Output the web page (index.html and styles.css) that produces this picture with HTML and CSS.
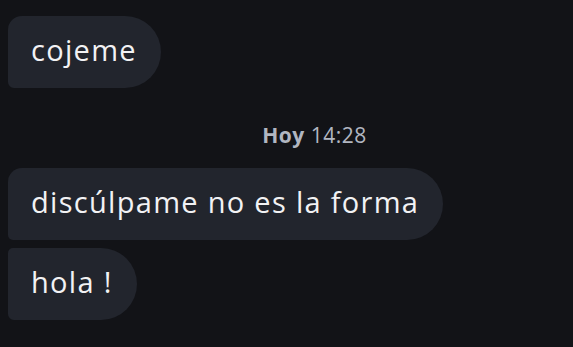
FILE: index.html
```html
<!DOCTYPE html>
<html lang="es">
<head>
  <meta charset="UTF-8">
  <meta name="viewport" content="width=device-width, initial-scale=1.0">
  <title>Chat</title>
  <link rel="stylesheet" href="styles.css">
</head>
<body>
  <div class="chat">
    <!-- Grupo anterior -->
    <div class="group">
      <div class="bubble single">cojeme</div>
    </div>

    <!-- Separador de hora -->
    <div class="stamp"><b>Hoy</b> 14:28</div>

    <!-- Grupo nuevo -->
    <div class="group">
      <div class="bubble first">discúlpame no es la forma</div>
      <div class="bubble last">hola !</div>
    </div>
  </div>
</body>
</html>
```

FILE: styles.css
```css
body {
  margin: 0;
  padding: 0;
  background-color: #121317;
  font-family: "Open Sans", sans-serif;
}
.chat {
  padding: 16px 8px;
}
.group {
  display: flex;
  flex-direction: column;
  align-items: flex-start;
  gap: 8px;
}
.bubble {
  background-color: #22252d;
  color: #f2f2f4;
  font-size: 29px;
  letter-spacing: 1.3px;
  line-height: 68px;
  height: 68px;
  padding: 0 24px 4px 23px;
  border-radius: 36px;
  white-space: nowrap;
}
.bubble.single {
  border-top-left-radius: 14px;
  border-bottom-left-radius: 6px;
}
.bubble.first {
  border-top-left-radius: 14px;
  border-bottom-left-radius: 5px;
}
.bubble.last {
  border-top-left-radius: 5px;
  border-bottom-left-radius: 6px;
}
.stamp {
  padding: 37px 0 22px 56px;
  text-align: center;
  color: #b1b6c1;
  font-size: 21px;
  letter-spacing: 0.5px;
  line-height: 21px;
}
.stamp b {
  font-weight: 700;
}
```
